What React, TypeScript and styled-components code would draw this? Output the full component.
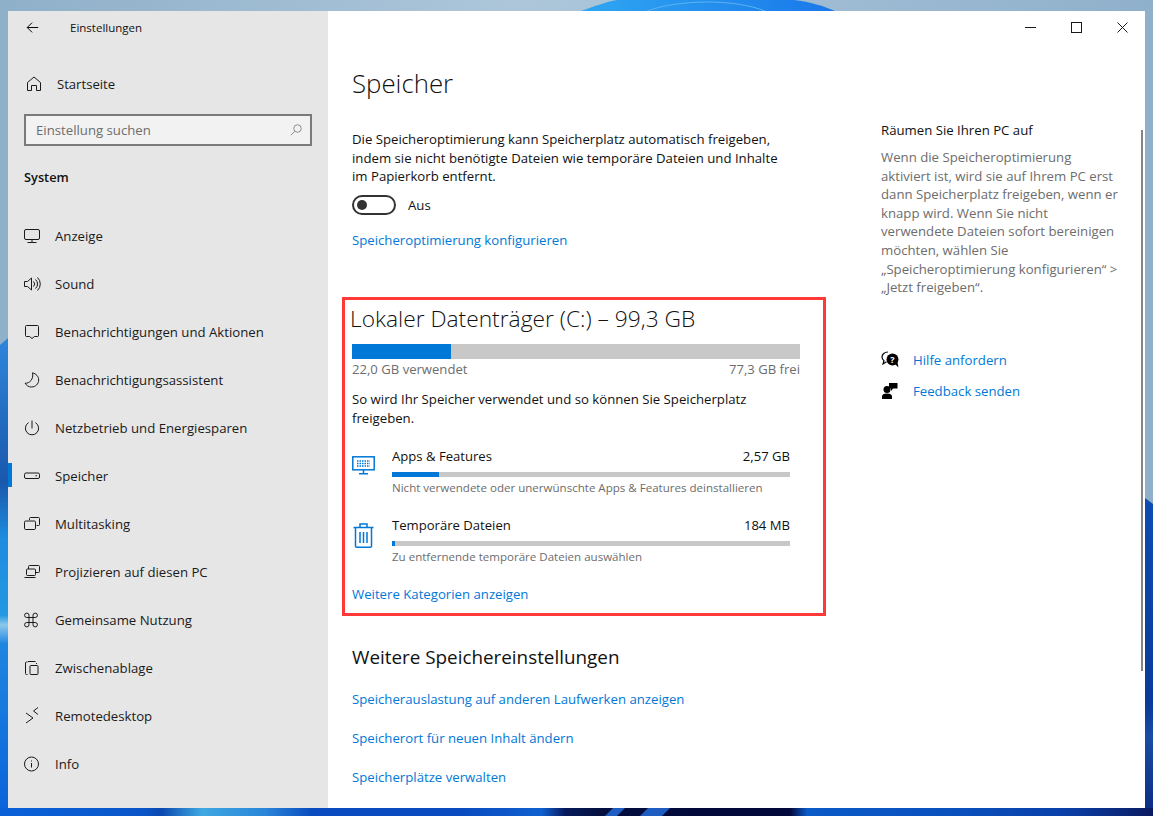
import React from 'react';
import styled, { createGlobalStyle } from 'styled-components';

const Global = createGlobalStyle`
  html, body { margin: 0; padding: 0; width: 1153px; height: 816px; overflow: hidden; }
  body { font-family: "Open Sans", "Noto Sans", sans-serif; color: #000; }
`;

const Desktop = styled.div`
  position: relative;
  width: 1153px;
  height: 816px;
  padding: 11px 8px 8px;
  box-sizing: border-box;
  background: #9ab8d0;
`;

const Wallpaper = styled.svg`
  position: absolute;
  inset: 0;
`;

const Window = styled.div`
  position: relative;
  display: flex;
  width: 1137px;
  height: 797px;
  background: #fff;
`;

const Sidebar = styled.aside`
  width: 320px;
  flex: none;
  background: #e6e6e6;
  display: flex;
  flex-direction: column;
`;

const TitleRow = styled.div`
  height: 32px;
  display: flex;
  align-items: center;
  padding-left: 18px;
`;

const AppTitle = styled.span`
  font-size: 11.5px;
  margin-left: 31px;
  color: #111;
`;

const HomeRow = styled.div`
  height: 48px;
  margin-top: 17px;
  display: flex;
  align-items: center;
  padding-left: 18px;
  font-size: 13.1px;
  color: #1a1a1a;
  gap: 15px;
`;

const Search = styled.div`
  width: 288px;
  height: 32px;
  margin: 6px 0 0 16px;
  box-sizing: border-box;
  border: 2px solid #7a7a7a;
  background: #f2f2f2;
  color: #6d6d6d;
  font-size: 13.2px;
  display: flex;
  align-items: center;
  justify-content: space-between;
  padding: 0 8px 0 10px;
`;

const SectionLabel = styled.div`
  font-size: 12.8px;
  font-weight: 600;
  padding: 21px 0 0 16px;
  height: 28px;
  line-height: 20px;
  color: #111;
`;

const Nav = styled.nav`
  margin-top: 17px;
  display: flex;
  flex-direction: column;
`;

const NavItem = styled.div<{ $active?: boolean }>`
  position: relative;
  height: 48px;
  display: flex;
  align-items: center;
  padding-left: 16px;
  gap: 15px;
  font-size: 13.2px;
  color: #1a1a1a;
  &::before {
    content: '';
    display: ${p => (p.$active ? 'block' : 'none')};
    position: absolute;
    left: 0;
    top: 11px;
    width: 4px;
    height: 24px;
    background: #0078d7;
  }
`;

const Main = styled.main`
  flex: 1;
  position: relative;
  display: flex;
  padding-left: 24px;
`;

const Content = styled.div`
  width: 490px;
  flex: none;
`;

const PageTitle = styled.h1`
  margin: 52px 0 0;
  height: 40px;
  font-size: 25.8px;
  line-height: 40px;
  font-weight: 300;
  color: #111;
`;

const Para = styled.p`
  margin: 27px 0 0;
  width: 436px;
  font-size: 13.2px;
  line-height: 18.6px;
  color: #111;
`;

const ToggleRow = styled.div`
  display: flex;
  align-items: center;
  gap: 12px;
  margin-top: 7px;
  height: 24px;
  font-size: 13.2px;
  color: #111;
`;

const Toggle = styled.span`
  width: 44px;
  height: 20px;
  box-sizing: border-box;
  border: 2px solid #333;
  border-radius: 10px;
  display: flex;
  align-items: center;
  padding-left: 3px;
  &::after {
    content: '';
    width: 10px;
    height: 10px;
    border-radius: 50%;
    background: #333;
  }
`;

const Link = styled.div`
  font-size: 13.2px;
  line-height: 20px;
  color: #0078d7;
`;

const ConfigLink = styled(Link)`
  margin-top: 13px;
`;

const Highlight = styled.section`
  margin: 47.2px 0 0 -10px;
  width: 484px;
  height: 319px;
  box-sizing: border-box;
  border: 3px solid #ff3838;
  padding: 0 7px;
`;

const DriveTitle = styled.h2`
  margin: 2px 0 0 -2px;
  height: 34px;
  font-size: 22.75px;
  line-height: 34px;
  font-weight: 300;
  color: #111;
`;

const Bar = styled.div<{ $h: number }>`
  height: ${p => p.$h}px;
  background: #c8c8c8;
`;

const BarFill = styled.div`
  height: 100%;
  background: #0078d7;
`;

const DriveBar = styled(Bar)`
  width: 448px;
  margin-top: 8px;
`;

const Between = styled.div`
  width: 448px;
  display: flex;
  justify-content: space-between;
  font-size: 13.1px;
  line-height: 20px;
  color: #6d6d6d;
`;

const Intro = styled(Para)`
  margin: 11px 0 0;
`;

const CatList = styled.div`
  margin-top: 18.8px;
`;

const Cat = styled.div`
  display: flex;
  width: 438px;
  height: 69px;
`;

const CatIcon = styled.div`
  width: 40px;
  flex: none;
`;

const CatBody = styled.div`
  flex: 1;
`;

const CatHead = styled.div`
  display: flex;
  justify-content: space-between;
  font-size: 13.1px;
  line-height: 20px;
  color: #111;
`;

const CatBar = styled(Bar)`
  margin-top: 6px;
`;

const CatNote = styled.div`
  font-size: 11.55px;
  line-height: 16px;
  color: #6d6d6d;
  margin-top: 3px;
`;

const Heading = styled.h3`
  margin: 27px 0 0;
  height: 28px;
  font-size: 18.85px;
  line-height: 28px;
  font-weight: 400;
  color: #111;
`;

const MoreLinks = styled.div`
  margin-top: 18px;
  display: flex;
  flex-direction: column;
  gap: 19px;
`;

const Aside = styled.aside`
  margin-left: 39px;
  padding-top: 109px;
  width: 242px;
`;

const AsideTitle = styled.div`
  font-size: 13.2px;
  line-height: 20px;
  color: #111;
`;

const AsideText = styled.p`
  margin: 8px 0 0;
  width: 240px;
  font-size: 13.2px;
  line-height: 18.6px;
  color: #6d6d6d;
`;

const HelpList = styled.div`
  margin-top: 53px;
  display: flex;
  flex-direction: column;
  gap: 11px;
`;

const HelpRow = styled.div`
  display: flex;
  align-items: center;
  gap: 12px;
  height: 20px;
`;

const WinControls = styled.div`
  position: absolute;
  top: 0;
  right: 0;
  display: flex;
`;

const WinButton = styled.div`
  width: 46px;
  height: 32px;
  display: flex;
  align-items: center;
  justify-content: center;
`;

const Scrollbar = styled.div`
  position: absolute;
  right: 2px;
  top: 119px;
  width: 2px;
  height: 541px;
  background: #858585;
`;

const Ico = ({ children, w = 16, h = 16, vb = '0 0 16 16', c = '#1a1a1a' }: { children: React.ReactNode; w?: number; h?: number; vb?: string; c?: string }) => (
  <svg width={w} height={h} viewBox={vb} fill="none" stroke={c} strokeWidth="1" style={{ flex: 'none', overflow: 'visible' }}>
    {children}
  </svg>
);

const nav: [string, React.ReactNode][] = [
  ['Anzeige', <><rect x=".5" y="1.5" width="15" height="10" rx="1.5" /><path d="M8 11.5v3M3.5 14.5h9" /></>],
  ['Sound', <><path d="M.5 5.5h3l4-3.5v12l-4-3.5h-3z" /><path d="M9.5 5.5a3.5 3.5 0 0 1 0 5M11.5 3.5a6 6 0 0 1 0 9M13.5 1.5a9 9 0 0 1 0 13" /></>],
  ['Benachrichtigungen und Aktionen', <path d="M2.500 1.500h11a1 1 0 0 1 1 1v9a1 1 0 0 1-1 1h-3l-2.500 2-2.500-2h-3a1 1 0 0 1-1-1v-9a1 1 0 0 1 1-1z" />],
  ['Benachrichtigungsassistent', <path d="M8.500.800c3.500.800 6.200 3.700 6.200 7.200 0 3.900-3.200 7-7.200 7-2.800 0-5.200-1.500-6.400-3.800 4.200.600 8.900-4.200 7.400-10.400z" />],
  ['Netzbetrieb und Energiesparen', <><path d="M8 .5v8" /><path d="M4.600 2.600a6.600 6.600 0 1 0 6.800 0" /></>],
  ['Speicher', <><rect x=".5" y="5" width="15" height="5.500" rx="1.500" /><path d="M11.500 7.800h1.500" /></>],
  ['Multitasking', <><path d="M5.500 4V2.500a1 1 0 0 1 1-1h8a1 1 0 0 1 1 1v6a1 1 0 0 1-1 1h-2" /><rect x=".5" y="5" width="11" height="8.500" rx="1.200" /></>],
  ['Projizieren auf diesen PC', <><path d="M4.500 5V2.500a1 1 0 0 1 1-1h9a1 1 0 0 1 1 1v5a1 1 0 0 1-1 1h-2.500" /><rect x="2.500" y="5" width="9" height="6.500" rx="1" /><path d="M.5 13.500h11" /></>],
  ['Gemeinsame Nutzung', <path d="M5 5.500V3.200A2.200 2.200 0 1 0 2.800 5.500h8.400A2.200 2.200 0 1 0 9 3.200v9.600a2.200 2.200 0 1 0 2.200-2.300H2.800A2.200 2.200 0 1 0 5 12.800z" />],
  ['Zwischenablage', <><path d="M3.500 14.500h-1a1 1 0 0 1-1-1V3a1 1 0 0 1 1-1h1" /><path d="M4 1.500h7.500M12.500 3v1" /><rect x="6" y="5.500" width="8" height="9" rx=".8" /></>],
  ['Remotedesktop', <path d="M2 5l7 5-7 5M14 -.5L9.500 3l4.500 3.500" />],
  ['Info', <><circle cx="7.500" cy="8" r="7" /><path d="M7.500 7v4.500M7.500 4.500v1" /></>],
];

export default function App() {
  return (
    <>
      <Global />
      <Desktop>
        <Wallpaper width="1153" height="816" viewBox="0 0 1153 816">
          <defs>
            <linearGradient id="top" x1="0" x2="1" y1="0" y2="0">
              <stop offset="0" stopColor="#8fb0c9" />
              <stop offset=".45" stopColor="#adc6da" />
              <stop offset="1" stopColor="#8fb0cb" />
            </linearGradient>
            <linearGradient id="dome" x1="0" x2="1" y1="0" y2="0">
              <stop offset="0" stopColor="#2fa6f2" />
              <stop offset="1" stopColor="#1a78ea" />
            </linearGradient>
            <linearGradient id="leftLow" x1="0" x2="0" y1="0" y2="1">
              <stop offset="0" stopColor="#2e86dc" />
              <stop offset=".3" stopColor="#1a58ac" />
              <stop offset=".42" stopColor="#1f8cdf" />
              <stop offset=".58" stopColor="#2398e2" />
              <stop offset=".6" stopColor="#8cc8ec" />
              <stop offset=".64" stopColor="#1f86e0" />
              <stop offset="1" stopColor="#0a62da" />
            </linearGradient>
            <linearGradient id="rightLow" x1="0" x2="0" y1="0" y2="1">
              <stop offset="0" stopColor="#0d4cb4" />
              <stop offset=".65" stopColor="#0a3a9a" />
              <stop offset=".75" stopColor="#1a4ca6" />
              <stop offset="1" stopColor="#0a2a80" />
            </linearGradient>
            <linearGradient id="floor" x1="0" x2="1" y1="0" y2="0">
              <stop offset="0" stopColor="#0a62d8" />
              <stop offset=".125" stopColor="#0a56c8" />
              <stop offset=".14" stopColor="#0b48b0" />
              <stop offset=".175" stopColor="#3fa8e2" />
              <stop offset=".23" stopColor="#2a86d8" />
              <stop offset=".27" stopColor="#0a4cc0" />
              <stop offset=".4" stopColor="#0a4cc0" />
              <stop offset=".47" stopColor="#1060d0" />
              <stop offset=".49" stopColor="#061a5c" />
              <stop offset=".52" stopColor="#04103f" />
              <stop offset=".6" stopColor="#02083a" />
              <stop offset=".685" stopColor="#02083a" />
              <stop offset=".7" stopColor="#0a5ac8" />
              <stop offset=".83" stopColor="#0a50bc" />
              <stop offset=".925" stopColor="#0a3fa8" />
              <stop offset="1" stopColor="#0a1a60" />
            </linearGradient>
          </defs>
          <rect width="1153" height="816" fill="url(#top)" />
          <path d="M581 11C595 6 606 2 617 0H794C810 2 824 6 835 11z" fill="url(#dome)" />
          <path d="M647 11C680 -1 735 -1 765 11" fill="none" stroke="#5bb4f0" strokeWidth="1" />
          <path d="M0 345L8 338V816H0z" fill="url(#leftLow)" />
          <path d="M1145 498L1153 504V816H1145z" fill="url(#rightLow)" />
          <rect y="808" width="1153" height="8" fill="url(#floor)" />
          <path d="M605 816l8-8h12l-8 8zM640 816l8-8h22l-8 8z" fill="#1f5dc0" />
        </Wallpaper>
        <Window>
          <Sidebar>
            <TitleRow>
              <Ico vb="0 0 16 16" w={13} h={13} c="#000"><path d="M15 8H1.500M7.500 2L1.500 8l6 6" strokeWidth="1.200" /></Ico>
              <AppTitle>Einstellungen</AppTitle>
            </TitleRow>
            <HomeRow>
              <Ico><path d="M1.500 14.500V6.500L8 1l6.500 5.500v8h-4v-5h-5v5z" /></Ico>
              Startseite
            </HomeRow>
            <Search>
              Einstellung suchen
              <Ico w={12} h={12} vb="0 0 16 16" c="#6d6d6d"><circle cx="10" cy="6" r="5" /><path d="M6 10l-5 5" /></Ico>
            </Search>
            <SectionLabel>System</SectionLabel>
            <Nav>
              {nav.map(([label, icon]) => (
                <NavItem key={label} $active={label === 'Speicher'}>
                  <Ico>{icon}</Ico>
                  {label}
                </NavItem>
              ))}
            </Nav>
          </Sidebar>
          <Main>
            <Content>
              <PageTitle>Speicher</PageTitle>
              <Para>Die Speicheroptimierung kann Speicherplatz automatisch freigeben, indem sie nicht benötigte Dateien wie temporäre Dateien und Inhalte im Papierkorb entfernt.</Para>
              <ToggleRow><Toggle />Aus</ToggleRow>
              <ConfigLink>Speicheroptimierung konfigurieren</ConfigLink>
              <Highlight>
                <DriveTitle>Lokaler Datenträger (C:) – 99,3 GB</DriveTitle>
                <DriveBar $h={15}><BarFill style={{ width: '22.1%' }} /></DriveBar>
                <Between><span>22,0 GB verwendet</span><span>77,3 GB frei</span></Between>
                <Intro>So wird Ihr Speicher verwendet und so können Sie Speicherplatz freigeben.</Intro>
                <CatList>
                  <Cat>
                    <CatIcon>
                      <svg width="23" height="19" viewBox="0 0 23 19" fill="none" stroke="#0078d7" strokeWidth="1.500" style={{ marginTop: 10 }}>
                        <rect x=".8" y=".8" width="21.400" height="13" />
                        <path d="M11.500 14v3.500M7 17.800h9" />
                        <path d="M5 5h13M5 7.500h13M5 10h13" strokeDasharray="1.500 1" strokeWidth="1.400" />
                      </svg>
                    </CatIcon>
                    <CatBody>
                      <CatHead><span>Apps &amp; Features</span><span>2,57 GB</span></CatHead>
                      <CatBar $h={5}><BarFill style={{ width: '11.900%' }} /></CatBar>
                      <CatNote>Nicht verwendete oder unerwünschte Apps &amp; Features deinstallieren</CatNote>
                    </CatBody>
                  </Cat>
                  <Cat>
                    <CatIcon>
                      <svg width="21" height="25" viewBox="0 0 21 25" fill="none" stroke="#0078d7" strokeWidth="1.500" style={{ margin: '8px 0 0 1px' }}>
                        <path d="M.5 4.500h20M7 4V1h7v3M2.500 4.500V23a1.200 1.200 0 0 0 1.200 1.200h13.600a1.200 1.200 0 0 0 1.200-1.200V4.500" />
                        <path d="M7 9v11M10.500 9v11M14 9v11" />
                      </svg>
                    </CatIcon>
                    <CatBody>
                      <CatHead><span>Temporäre Dateien</span><span>184 MB</span></CatHead>
                      <CatBar $h={5}><BarFill style={{ width: '0.800%' }} /></CatBar>
                      <CatNote>Zu entfernende temporäre Dateien auswählen</CatNote>
                    </CatBody>
                  </Cat>
                </CatList>
                <Link>Weitere Kategorien anzeigen</Link>
              </Highlight>
              <Heading>Weitere Speichereinstellungen</Heading>
              <MoreLinks>
                <Link>Speicherauslastung auf anderen Laufwerken anzeigen</Link>
                <Link>Speicherort für neuen Inhalt ändern</Link>
                <Link>Speicherplätze verwalten</Link>
              </MoreLinks>
            </Content>
            <Aside>
              <AsideTitle>Räumen Sie Ihren PC auf</AsideTitle>
              <AsideText>Wenn die Speicheroptimierung aktiviert ist, wird sie auf Ihrem PC erst dann Speicherplatz freigeben, wenn er knapp wird. Wenn Sie nicht verwendete Dateien sofort bereinigen möchten, wählen Sie „Speicheroptimierung konfigurieren“ &gt; „Jetzt freigeben“.</AsideText>
              <HelpList>
                <HelpRow>
                  <svg width="20" height="18" viewBox="0 0 20 18" style={{ flex: 'none' }}>
                    <path d="M7 1C3.500 1 1 3.200 1 6c0 1.500.7 2.800 2 3.700L2 13l3.500-2.200" fill="none" stroke="#000" strokeWidth="1.200" />
                    <circle cx="11.500" cy="8.500" r="6" fill="#000" />
                    <path d="M14 13l3.500 3.500-1-5z" fill="#000" />
                    <text x="11.500" y="11.800" fontSize="9" fontWeight="700" fill="#fff" textAnchor="middle">?</text>
                  </svg>
                  <Link>Hilfe anfordern</Link>
                </HelpRow>
                <HelpRow>
                  <svg width="20" height="18" viewBox="0 0 20 18" style={{ flex: 'none' }}>
                    <circle cx="6" cy="7.500" r="3.500" fill="#000" />
                    <path d="M1 17v-2.500C1 12.500 2.800 11.500 6 11.500s5 1 5 3V17z" fill="#000" />
                    <path d="M8 1h8.500v5.500H12L10 9V6.500H8z" fill="#000" />
                  </svg>
                  <Link>Feedback senden</Link>
                </HelpRow>
              </HelpList>
            </Aside>
            <WinControls>
              <WinButton><Ico w={11} h={11} vb="0 0 11 11"><path d="M0 5.500h11" /></Ico></WinButton>
              <WinButton><Ico w={11} h={11} vb="0 0 11 11"><rect x=".5" y=".5" width="10" height="10" /></Ico></WinButton>
              <WinButton><Ico w={11} h={11} vb="0 0 11 11"><path d="M.5.500l10 10M10.500.500l-10 10" /></Ico></WinButton>
            </WinControls>
            <Scrollbar />
          </Main>
        </Window>
      </Desktop>
    </>
  );
}
